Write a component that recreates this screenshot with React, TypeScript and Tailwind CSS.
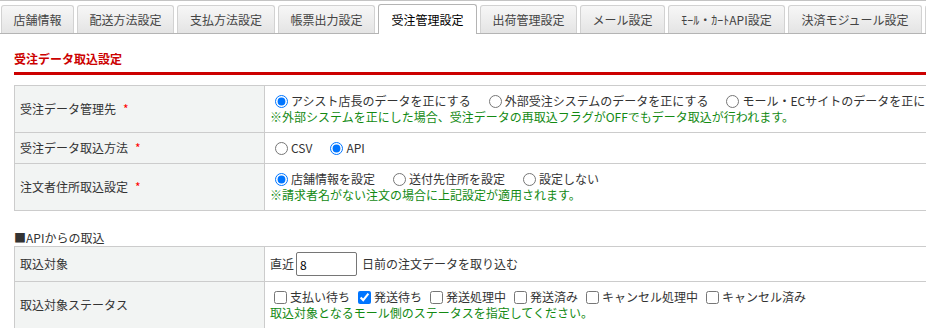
import type { ReactNode } from "react";

// widths taken from the reference tab strip
const tabs = [
  { label: "店舗情報", w: "w-[73px]" },
  { label: "配送方法設定", w: "w-[97px]" },
  { label: "支払方法設定", w: "w-[98px]" },
  { label: "帳票出力設定", w: "w-[97px]" },
  { label: "受注管理設定", w: "w-[99px]" },
  { label: "出荷管理設定", w: "w-[97px]" },
  { label: "メール設定", w: "w-[85px]" },
  { label: "ﾓｰﾙ・ｶｰﾄAPI設定", w: "w-[117px]" },
  { label: "決済モジュール設定", w: "w-[134px]" },
  { label: "その他設定", w: "w-[85px]" },
];

const ACTIVE = "受注管理設定";

export default function App() {
  return (
    <div
      className="w-full overflow-hidden bg-white text-[12px] leading-[16px] text-[#333]"
      style={{ fontFamily: '"Noto Sans CJK JP", "Noto Sans", sans-serif' }}
    >
      <div className="w-[1100px] border-t border-[#c4c4c4]">
        <TabBar />

        <div className="pl-[14px]">
          <h2 className="mt-[17px] font-bold text-[#cc0000]">受注データ取込設定</h2>
          <div className="mt-[5px] h-[3px] bg-[#cc0000]" />

          <div className="mt-[10px] border-t border-[#cccccc]">
            <Row label="受注データ管理先" required height="h-[46px]">
              <div className="flex items-center">
                <Radio label="アシスト店長のデータを正にする" checked name="master" />
                <Radio label="外部受注システムのデータを正にする" name="master" />
                <Radio label="モール・ECサイトのデータを正にする" name="master" />
              </div>
              <Note>※外部システムを正にした場合、受注データの再取込フラグがOFFでもデータ取込が行われます。</Note>
            </Row>
            <Row label="受注データ取込方法" required height="h-[30px]">
              <div className="flex items-center">
                <Radio label="CSV" name="method" />
                <Radio label="API" checked name="method" />
              </div>
            </Row>
            <Row label="注文者住所取込設定" required height="h-[46px]">
              <div className="flex items-center">
                <Radio label="店舗情報を設定" checked name="addr" />
                <Radio label="送付先住所を設定" name="addr" />
                <Radio label="設定しない" name="addr" />
              </div>
              <Note>※請求者名がない注文の場合に上記設定が適用されます。</Note>
            </Row>
          </div>

          <div className="mt-[19px]">■APIからの取込</div>

          <div className="border-t border-[#cccccc]">
            <Row label="取込対象" height="h-[34px]">
              <div className="flex items-center">
                <span>直近</span>
                <input
                  type="text"
                  defaultValue="8"
                  className="ml-[2px] h-[24px] w-[61px] rounded-[2px] border border-[#767676] px-[3px] text-[12px] text-black outline-none"
                />
                <span className="ml-[5px]">日前の注文データを取り込む</span>
              </div>
            </Row>
            <Row label="取込対象ステータス" height="h-[46px]">
              <div className="flex items-center">
                <Check label="支払い待ち" />
                <Check label="発送待ち" checked />
                <Check label="発送処理中" />
                <Check label="発送済み" />
                <Check label="キャンセル処理中" />
                <Check label="キャンセル済み" />
              </div>
              <Note>取込対象となるモール側のステータスを指定してください。</Note>
            </Row>
          </div>
        </div>
      </div>
    </div>
  );
}

function TabBar() {
  return (
    <div className="flex h-[33px] items-end gap-[3px] border-b border-[#b4b4b4] pl-[1px]">
      {tabs.map((t) => {
        const active = t.label === ACTIVE;
        return (
          <div
            key={t.label}
            className={
              active
                ? `-mb-px flex h-[30px] ${t.w} shrink-0 items-center justify-center whitespace-nowrap rounded-t-[3px] border border-b-0 border-[#b4b4b4] bg-white text-[12px] text-black`
                : `flex h-[28px] ${t.w} shrink-0 items-center justify-center whitespace-nowrap rounded-t-[3px] border border-b-0 border-[#d2d2d2] bg-gradient-to-b from-[#f7f7f7] to-[#e4e4e4] text-[12px] text-[#444]`
            }
          >
            {t.label}
          </div>
        );
      })}
    </div>
  );
}

function Row({
  label,
  required,
  height,
  children,
}: {
  label: string;
  required?: boolean;
  height: string;
  children: ReactNode;
}) {
  return (
    <div className="flex border-b border-l border-[#cccccc]">
      <div className={`flex w-[250px] shrink-0 items-center border-r border-[#cccccc] bg-[#f2f4f3] pl-[5px] ${height}`}>
        {label}
        {required && <span className="ml-[7px] text-[#ff0000]">*</span>}
      </div>
      <div className={`flex flex-1 flex-col justify-center whitespace-nowrap pl-[5px] ${height}`}>
        {children}
      </div>
    </div>
  );
}

function Radio({ label, checked, name }: { label: string; checked?: boolean; name: string }) {
  return (
    <label className="mr-[13px] flex items-center">
      <input
        type="radio"
        name={name}
        defaultChecked={checked}
        className="ml-[5px] mr-[3px] h-[13px] w-[13px]"
      />
      <span>{label}</span>
    </label>
  );
}

function Check({ label, checked }: { label: string; checked?: boolean }) {
  return (
    <label className="mr-[4px] flex items-center">
      <input
        type="checkbox"
        defaultChecked={checked}
        className="ml-[4px] mr-[3px] h-[13px] w-[13px]"
      />
      <span>{label}</span>
    </label>
  );
}

function Note({ children }: { children: ReactNode }) {
  return <div className="text-[#138a13]">{children}</div>;
}
